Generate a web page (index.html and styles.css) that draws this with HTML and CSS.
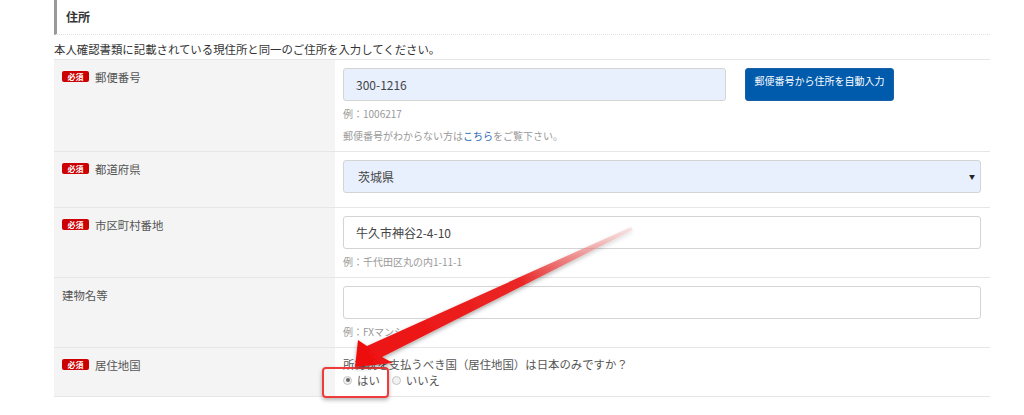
FILE: index.html
```html
<!DOCTYPE html>
<html lang="ja">
<head>
    <meta charset="UTF-8">
    <meta name="viewport" content="width=device-width, initial-scale=1.0">
    <title>住所</title>
    <link rel="stylesheet" href="styles.css">
</head>
<body>
    <div class="page">
        <h2 class="section-title">住所</h2>
        <p class="lead">本人確認書類に記載されている現住所と同一のご住所を入力してください。</p>

        <div class="form-table">
            <div class="row">
                <div class="label"><span class="req">必須</span>郵便番号</div>
                <div class="field">
                    <div class="zip-line">
                        <input class="input input-zip filled" type="text" value="300-1216">
                        <button class="btn-auto" type="button">郵便番号から住所を自動入力</button>
                    </div>
                    <p class="hint">例：1006217</p>
                    <p class="hint hint-gap">郵便番号がわからない方は<a href="#">こちら</a>をご覧下さい。</p>
                </div>
            </div>

            <div class="row">
                <div class="label"><span class="req">必須</span>都道府県</div>
                <div class="field">
                    <div class="select-wrap">
                        <select class="input select filled">
                            <option>茨城県</option>
                        </select>
                    </div>
                </div>
            </div>

            <div class="row">
                <div class="label"><span class="req">必須</span>市区町村番地</div>
                <div class="field">
                    <input class="input" type="text" value="牛久市神谷2-4-10">
                    <p class="hint">例：千代田区丸の内1-11-1</p>
                </div>
            </div>

            <div class="row">
                <div class="label">建物名等</div>
                <div class="field">
                    <input class="input" type="text" value="">
                    <p class="hint">例：FXマンション</p>
                </div>
            </div>

            <div class="row">
                <div class="label"><span class="req">必須</span>居住地国</div>
                <div class="field field-radio">
                    <p class="question">所得税を支払うべき国（居住地国）は日本のみですか？</p>
                    <div class="radios">
                        <label class="radio"><input type="radio" name="country" checked>はい</label>
                        <label class="radio"><input type="radio" name="country">いいえ</label>
                    </div>
                </div>
            </div>
        </div>
    </div>

    <!-- annotation over the screenshot -->
    <div class="callout"></div>
    <svg class="arrow" xmlns="http://www.w3.org/2000/svg" width="1024" height="415" viewBox="0 0 1024 415">
        <defs>
            <linearGradient id="arrowFade" x1="356" y1="366" x2="632" y2="228" gradientUnits="userSpaceOnUse">
                <stop offset="0" stop-color="#ee0f0f"/>
                <stop offset="0.6" stop-color="#ea2626"/>
                <stop offset="1" stop-color="#f2b0b0" stop-opacity="0.3"/>
            </linearGradient>
            <filter id="arrowShadow" x="-20%" y="-20%" width="140%" height="140%">
                <feDropShadow dx="0" dy="2" stdDeviation="2" flood-color="#000" flood-opacity="0.35"/>
            </filter>
        </defs>
        <polygon points="355,367 358,340 367,346 631,227 633,230 382,357 393,363" fill="url(#arrowFade)" filter="url(#arrowShadow)"/>
    </svg>
</body>
</html>
```

FILE: styles.css
```css
/* Base */
body {
    margin: 0;
    padding: 0;
    background: #fff;
    color: #333;
    font-family: "Noto Sans CJK JP", "Noto Sans", sans-serif;
    font-size: 11.4px;
}

.page {
    width: 936px;
    margin-left: 54px;
}

.section-title {
    margin: 0;
    height: 35px;
    padding-left: 9px;
    border-left: 3px solid #999;
    border-bottom: 1px dotted #e2e2e2;
    box-sizing: border-box;
    font-size: 12px;
    font-weight: bold;
    line-height: 34px;
    color: #333;
}

.lead {
    margin: 0;
    padding-top: 5px;
    height: 19px;
    line-height: 18px;
    border-bottom: 1px solid #e6e6e6;
}

/* Form table */
.row {
    display: grid;
    grid-template-columns: 281px 1fr;
    border-bottom: 1px solid #e6e6e6;
}

.label {
    background: #f4f4f4;
    padding: 9px 8px;
    color: #555;
    line-height: 16px;
    display: flex;
    align-items: flex-start;
}

.req {
    display: inline-block;
    width: 27px;
    height: 11px;
    margin: 2px 6px 0 0;
    background: #cc0000;
    border-radius: 2px;
    color: #fff;
    font-size: 8px;
    font-weight: bold;
    line-height: 11px;
    text-align: center;
}

.field {
    padding: 8px 9px 8px 8px;
}

.input {
    display: block;
    width: 100%;
    height: 33px;
    box-sizing: border-box;
    margin: 0 0 6px;
    padding: 0 12px;
    border: 1px solid #d4d4d4;
    border-radius: 3px;
    background: #fff;
    font-family: inherit;
    font-size: 12px;
    color: #444;
}

.filled {
    background: #e8f0fe;
}

.zip-line {
    display: flex;
    align-items: flex-start;
    gap: 19px;
}

.input-zip {
    width: 383px;
}

.btn-auto {
    width: 149px;
    height: 33px;
    padding: 6px 0 0;
    border: 1px solid #1a5fa8;
    border-radius: 3px;
    background: #005bac;
    color: #fff;
    font-family: inherit;
    font-size: 10px;
    line-height: 12px;
    display: flex;
    justify-content: center;
    align-items: flex-start;
}

.hint {
    margin: 0;
    font-size: 10px;
    line-height: 14px;
    color: #999;
}

.hint-gap {
    margin-top: 8px;
}

.hint a {
    color: #2a6ab7;
    text-decoration: none;
}

.select-wrap {
    position: relative;
}

.select {
    appearance: none;
    -webkit-appearance: none;
    padding-left: 14px;
}

.select-wrap::after {
    content: "▼";
    position: absolute;
    right: 6px;
    top: 12px;
    font-size: 6px;
    color: #222;
}

.field-radio {
    color: #555;
}

.question {
    margin: 0;
    line-height: 16px;
}

.radios {
    display: flex;
    gap: 12px;
    line-height: 16px;
}

.radio {
    display: flex;
    align-items: center;
}

.radio input {
    appearance: none;
    -webkit-appearance: none;
    width: 9px;
    height: 9px;
    margin: 0 5px 0 0;
    border: 1px solid #c4c4c4;
    border-radius: 50%;
    background: #f2f2f2;
    box-sizing: border-box;
    position: relative;
}

.radio input:checked::after {
    content: "";
    position: absolute;
    left: 1.5px;
    top: 1.5px;
    width: 4px;
    height: 4px;
    border-radius: 50%;
    background: #666;
}

/* Annotation */
.callout {
    position: absolute;
    left: 322px;
    top: 367px;
    width: 63px;
    height: 27px;
    border: 2px solid #ee3b3b;
    border-radius: 4px;
    box-shadow: 0 2px 4px rgba(0, 0, 0, 0.3);
}

.arrow {
    position: absolute;
    left: 0;
    top: 0;
    pointer-events: none;
}
```
